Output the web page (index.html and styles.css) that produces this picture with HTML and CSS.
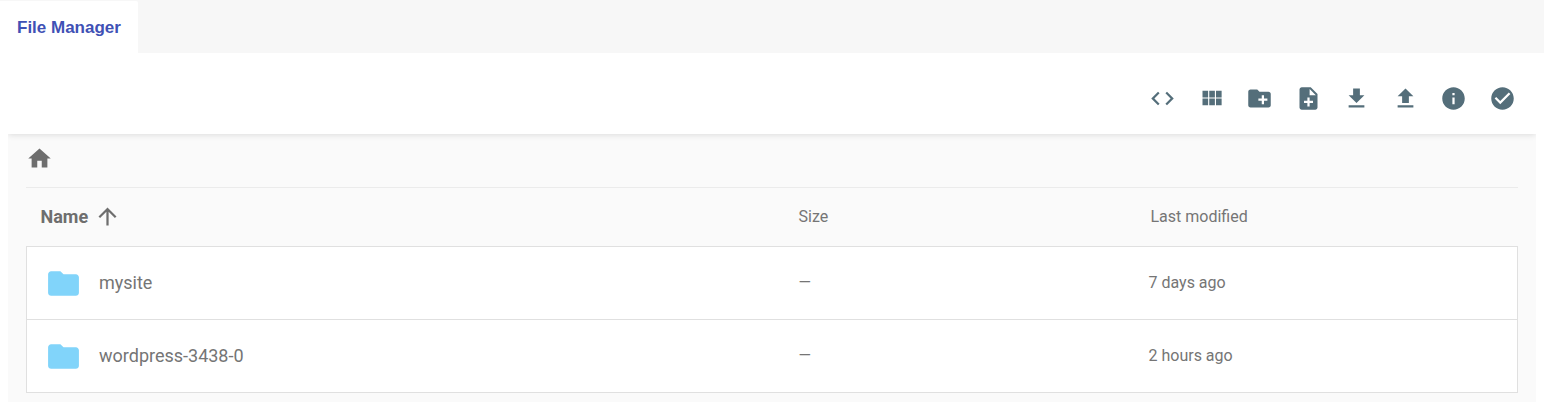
FILE: index.html
```html
<!DOCTYPE html>
<html lang="en">
<head>
<meta charset="utf-8">
<meta name="viewport" content="width=device-width, initial-scale=1">
<title>File Manager</title>
<link rel="stylesheet" href="styles.css">
</head>
<body>
<nav class="tabs">
  <a class="tab" href="#files" aria-current="page">File Manager</a>
</nav>
<main class="manager" id="files">
  <div class="toolbar">
    <div class="actions">
      <button class="action" type="button" aria-label="Edit code"><svg class="icon" viewBox="0 0 24 24"><path d="M9.4 16.6L4.8 12l4.6-4.6L8 6l-6 6 6 6 1.4-1.4zm5.2 0l4.6-4.6-4.6-4.6L16 6l6 6-6 6-1.4-1.4z"/></svg></button>
      <button class="action" type="button" aria-label="Grid view"><svg class="icon" viewBox="0 0 24 24"><path d="M4 11h5V5H4v6zm0 7h5v-6H4v6zm6 0h5v-6h-5v6zm6 0h5v-6h-5v6zm-6-7h5V5h-5v6zm6-6v6h5V5h-5z"/></svg></button>
      <button class="action" type="button" aria-label="New folder"><svg class="icon" viewBox="0 0 24 24"><path d="M20 6h-8l-2-2H4c-1.11 0-1.99.89-1.99 2L2 18c0 1.11.89 2 2 2h16c1.11 0 2-.89 2-2V8c0-1.11-.89-2-2-2zm-1 8h-3v3h-2v-3h-3v-2h3V9h2v3h3v2z"/></svg></button>
      <button class="action" type="button" aria-label="New file"><svg class="icon" viewBox="0 0 24 24"><path d="M14 2H6c-1.1 0-1.99.9-1.99 2L4 20c0 1.1.89 2 1.99 2H18c1.1 0 2-.9 2-2V8l-6-6zm2 14h-3v3h-2v-3H8v-2h3v-3h2v3h3v2zm-3-7V3.5L18.5 9H13z"/></svg></button>
      <button class="action" type="button" aria-label="Download"><svg class="icon" viewBox="0 0 24 24"><path d="M19 9h-4V3H9v6H5l7 7 7-7zM5 18v2h14v-2H5z"/></svg></button>
      <button class="action" type="button" aria-label="Upload"><svg class="icon" viewBox="0 0 24 24"><path d="M9 16h6v-6h4l-7-7-7 7h4zm-4 2h14v2H5z"/></svg></button>
      <button class="action" type="button" aria-label="Information"><svg class="icon" viewBox="0 0 24 24"><path d="M12 2C6.48 2 2 6.48 2 12s4.48 10 10 10 10-4.48 10-10S17.52 2 12 2zm1 15h-2v-6h2v6zm0-8h-2V7h2v2z"/></svg></button>
      <button class="action" type="button" aria-label="Select multiple"><svg class="icon" viewBox="0 0 24 24"><path d="M12 2C6.48 2 2 6.48 2 12s4.48 10 10 10 10-4.48 10-10S17.52 2 12 2zm-2 15l-5-5 1.41-1.41L10 14.17l7.59-7.59L19 8l-9 9z"/></svg></button>
    </div>
  </div>
  <div class="content">
    <nav class="breadcrumbs">
      <a class="home" href="#home" aria-label="Home"><svg class="icon" viewBox="0 0 24 24"><path d="M10 20v-6h4v6h5v-8h3L12 3 2 12h3v8z"/></svg></a>
    </nav>
    <table class="listing">
      <thead>
        <tr>
          <th class="col-name"><button class="sort" type="button">Name<svg class="icon" viewBox="0 0 24 24"><path d="M4 12l1.41 1.41L11 7.83V20h2V7.83l5.58 5.59L20 12l-8-8-8 8z"/></svg></button></th>
          <th class="col-size">Size</th>
          <th class="col-modified">Last modified</th>
        </tr>
      </thead>
      <tbody>
        <tr>
          <td><a class="entry" href="#mysite"><svg class="folder" viewBox="0 0 24 24"><path d="M10 4H4c-1.1 0-1.99.9-1.99 2L2 18c0 1.1.9 2 2 2h16c1.1 0 2-.9 2-2V8c0-1.1-.9-2-2-2h-8l-2-2z"/></svg>mysite</a></td>
          <td>—</td>
          <td>7 days ago</td>
        </tr>
        <tr>
          <td><a class="entry" href="#wordpress-3438-0"><svg class="folder" viewBox="0 0 24 24"><path d="M10 4H4c-1.1 0-1.99.9-1.99 2L2 18c0 1.1.9 2 2 2h16c1.1 0 2-.9 2-2V8c0-1.1-.9-2-2-2h-8l-2-2z"/></svg>wordpress-3438-0</a></td>
          <td>—</td>
          <td>2 hours ago</td>
        </tr>
      </tbody>
    </table>
  </div>
</main>
</body>
</html>
```

FILE: styles.css
```css
* {
  box-sizing: border-box;
}

body {
  margin: 0;
  background: #fff;
  color: #757575;
  font: 16px/24px Roboto, sans-serif;
}

a {
  color: inherit;
  text-decoration: none;
}

button {
  padding: 0;
  border: 0;
  background: none;
  color: inherit;
  font: inherit;
  cursor: pointer;
}

.icon {
  display: block;
  width: 27px;
  height: 27px;
  fill: currentColor;
}

.tabs {
  display: flex;
  padding-top: 1px;
  background: #f7f7f7;
}

.tab {
  padding: 15px 17px 13px;
  border-top-right-radius: 2px;
  background: #fff;
  color: #3f51b5;
  font: bold 17px/24px "Liberation Sans", Arial, sans-serif;
}

.manager {
  margin: 0 8px;
}

.toolbar {
  position: relative;
  display: flex;
  justify-content: flex-end;
  padding: 32px 20px 22px;
  background: #fff;
  box-shadow: 0 1px 6px rgba(0, 0, 0, 0.12);
  clip-path: inset(0 0 -8px 0);
}

.actions {
  display: flex;
  justify-content: space-between;
  width: 367px;
  color: #546e7a;
}

.content {
  padding: 0 18px 9px;
  background: #fafafa;
}

.breadcrumbs {
  display: flex;
  padding: 11px 0 15px;
  border-bottom: 1px solid #ebebeb;
  color: #6e6e6e;
}

.listing {
  width: 100%;
  border-collapse: collapse;
  table-layout: fixed;
}

.listing th {
  height: 58px;
  padding: 0;
  font-weight: 400;
  text-align: left;
}

.listing td {
  height: 73px;
  padding: 1px 0 0;
  background: #fff;
}

.listing tbody tr {
  border: 1px solid #e0e0e0;
}

.listing .col-name {
  width: 772px;
  padding-left: 14px;
}

.listing .col-size {
  width: 350px;
}

.listing .col-modified {
  padding-left: 2px;
}

.sort {
  display: flex;
  align-items: center;
  gap: 6px;
  color: #6e6e6e;
  font-size: 18px;
  font-weight: 700;
}

.entry {
  display: flex;
  align-items: center;
  gap: 17px;
  padding-left: 18px;
  font-size: 18px;
}

.folder {
  width: 37px;
  height: 37px;
  fill: #81d4fa;
}
```
